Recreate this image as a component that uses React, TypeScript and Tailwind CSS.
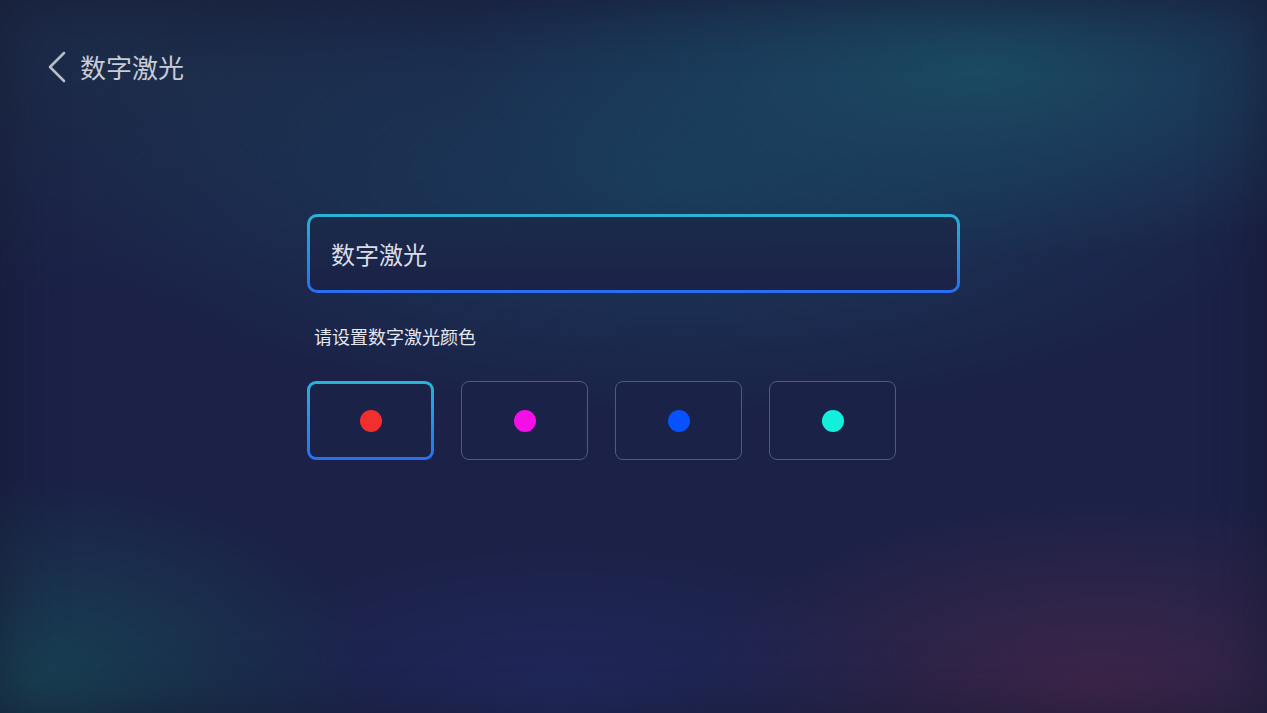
const colors = [
  { id: "red", dot: "bg-[#f22f2f]" },
  { id: "magenta", dot: "bg-[#f30fe6]" },
  { id: "blue", dot: "bg-[#0652ff]" },
  { id: "cyan", dot: "bg-[#12f0dc]" },
];

function Swatch({ dot, selected }: { dot: string; selected: boolean }) {
  if (selected) {
    return (
      <div className="h-[79px] w-[127px] rounded-[9px] bg-linear-to-b from-[#2bb3d8] to-[#2a6ef2] p-[3px]">
        <div className="flex h-full w-full items-center justify-center rounded-[6px] bg-[#1b2247]">
          <span className={`size-[22px] rounded-full ${dot}`} />
        </div>
      </div>
    );
  }
  return (
    <div className="flex h-[79px] w-[127px] items-center justify-center rounded-[8px] border border-[#545a7c] bg-[#1b2247]">
      <span className={`size-[22px] rounded-full ${dot}`} />
    </div>
  );
}

export default function App() {
  return (
    <div className="relative flex h-[713px] w-full flex-col overflow-hidden bg-[#1b2147] font-['Noto_Sans_CJK_SC','Noto_Sans',sans-serif]">
      <div className="pointer-events-none absolute inset-0 bg-[radial-gradient(ellipse_520px_190px_at_980px_70px,#1b4a62_0%,rgba(27,70,98,0.6)_45%,transparent_100%),radial-gradient(ellipse_620px_240px_at_680px_180px,rgba(26,66,96,0.8)_0%,transparent_100%),radial-gradient(ellipse_520px_260px_at_120px_40px,rgba(29,46,74,0.9)_0%,transparent_100%),radial-gradient(ellipse_330px_200px_at_40px_680px,rgba(24,66,84,0.95)_0%,transparent_100%),radial-gradient(ellipse_360px_160px_at_560px_700px,rgba(34,42,96,0.9)_0%,transparent_100%),radial-gradient(ellipse_420px_200px_at_1100px_690px,rgba(64,38,74,0.95)_0%,transparent_100%)]" />
      <div className="pointer-events-none absolute inset-0 shadow-[inset_0_0_60px_rgba(20,22,40,0.55)]" />

      <div className="relative flex items-center gap-[14px] pl-[47px] pt-[51px]">
        <svg width="19" height="32" viewBox="0 0 19 32" fill="none">
          <path d="M17 2 L3 16 L17 30" stroke="#b7bcc7" strokeWidth="2.6" strokeLinecap="round" strokeLinejoin="round" />
        </svg>
        <span className="text-[26px] leading-[32px] text-[#c8ccd6]">数字激光</span>
      </div>

      <div className="relative ml-[307px] mt-[131px] flex w-[653px] flex-col">
        <div className="h-[79px] rounded-[10px] bg-linear-to-b from-[#2cb2d6] to-[#2a6cf2] p-[3px]">
          <div className="flex h-full w-full items-center rounded-[7px] bg-linear-to-b from-[#1b2b4a] to-[#1b2247] pl-[21px]">
            <span className="text-[24px] leading-[30px] text-[#dadde6]">数字激光</span>
          </div>
        </div>

        <div className="mt-[30px] pl-[7px] text-[18px] leading-[26px] text-[#e4e7ee]">请设置数字激光颜色</div>

        <div className="mt-[32px] flex gap-[27px]">
          {colors.map((c, i) => (
            <Swatch key={c.id} dot={c.dot} selected={i === 0} />
          ))}
        </div>
      </div>
    </div>
  );
}
